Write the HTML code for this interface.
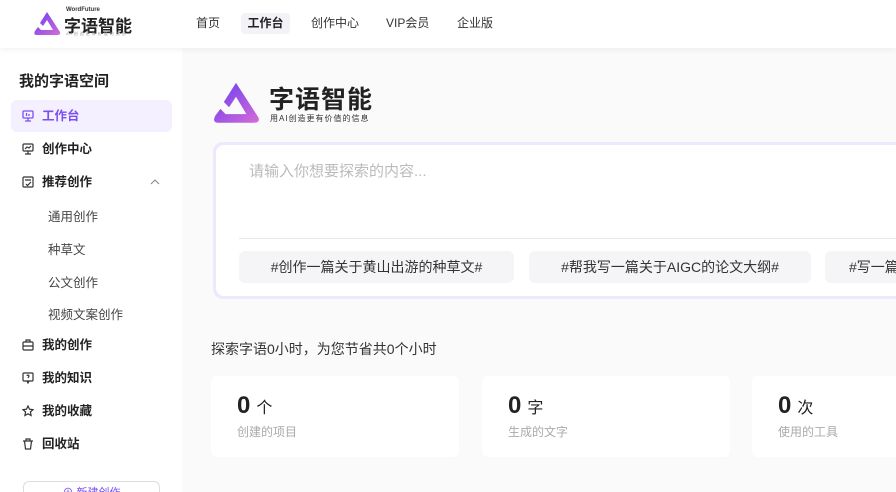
<!DOCTYPE html>
<html><head><meta charset="utf-8"><style>
*{margin:0;padding:0;box-sizing:border-box}
html,body{width:896px;height:492px;overflow:hidden}
body{background:#fafafa;font-family:"Liberation Sans","Noto Sans CJK SC",sans-serif;position:relative;color:#222}
.hdr{position:absolute;left:0;top:0;width:896px;height:48px;background:#fff;box-shadow:0 2px 6px rgba(0,0,0,.05);z-index:2}
.nav{position:absolute;top:13px;font-size:12px;color:#333;height:21px;line-height:21px}
.side{position:absolute;left:0;top:48px;width:182px;height:444px;background:#fff;overflow:hidden}
.it{position:absolute;left:11px;width:161px;height:32px;line-height:32px;font-size:12.5px;font-weight:bold;color:#222;padding-left:31px}
.it svg{position:absolute;left:11px;top:10px}
.sub{position:absolute;left:48px;font-size:12.5px;color:#444}
.box{position:absolute;left:213px;top:142px;width:700px;height:157px;background:#efe8fd;border-radius:10px}
.inner{position:absolute;left:3px;top:3px;right:0;bottom:3px;background:#fff;border-radius:8px}
.tag{position:absolute;top:251px;height:32px;line-height:32px;background:#f5f5f8;border-radius:6px;font-size:14px;color:#333;text-align:center}
.card{position:absolute;top:376px;width:248px;height:81px;background:#fff;border-radius:6px}
.card b{position:absolute;left:26px;top:16px;font-size:24px;color:#222}
.card b span{font-size:16px;font-weight:normal;margin-left:6px}
.card i{position:absolute;left:26px;top:47px;font-style:normal;font-size:12px;color:#aaa}
</style></head><body>
<div class="hdr">
<svg style="position:absolute;left:32px;top:10px" width="30" height="26" viewBox="0 0 30 26"><defs><linearGradient id="g" x1="0" y1="0" x2="1" y2="1"><stop offset="0" stop-color="#6a3df0"/><stop offset="1" stop-color="#d46cd8"/></linearGradient></defs><path d="M15 2 L28 22 Q29 25 25 25 L5 25 Q1 25 3 21 L6 17 L9 20 L21 20 L15 10 L11 16 L8 13 Z" fill="url(#g)"/></svg>
<div style="position:absolute;left:66px;top:7px;font-size:6px;font-weight:bold;color:#333">WordFuture</div>
<div style="position:absolute;left:64px;top:12px;font-size:17px;font-weight:bold;color:#222">字语智能</div>
<div style="position:absolute;left:66px;top:31px;font-size:4px;color:#999;letter-spacing:2px">AI创造更有价值的信息</div>
<div class="nav" style="left:196px">首页</div>
<div class="nav" style="left:241px;width:49px;background:#f3f2f7;border-radius:4px;text-align:center;font-weight:bold;color:#222">工作台</div>
<div class="nav" style="left:311px">创作中心</div>
<div class="nav" style="left:386px">VIP会员</div>
<div class="nav" style="left:457px">企业版</div>
</div>
<div class="side">
<div style="position:absolute;left:19px;top:22px;font-size:15px;font-weight:bold;color:#222">我的字语空间</div>
<div class="it" style="top:52px;background:#f4f0ff;border-radius:6px;color:#7b4df3"><svg width="12" height="12" viewBox="0 0 12 12" fill="none" stroke="#7b4df3" stroke-width="1.3"><rect x="1" y="1" width="10" height="7" rx="1"/><path d="M6 8v3M3 11h6M4.5 3v3M7 4v2"/></svg>工作台</div>
<div class="it" style="top:85px"><svg width="12" height="12" viewBox="0 0 12 12" fill="none" stroke="#333" stroke-width="1.2"><rect x="1" y="1" width="10" height="7" rx="1"/><path d="M6 8v3M3 11h6M3 6l2-2 2 1 2-2"/></svg>创作中心</div>
<div class="it" style="top:118px"><svg width="12" height="12" viewBox="0 0 12 12" fill="none" stroke="#333" stroke-width="1.2"><rect x="1" y="1" width="10" height="10" rx="1"/><path d="M3 4h6M4 8l1.5 1.5L9 6"/></svg>推荐创作<svg style="left:139px;top:13px" width="10" height="6" viewBox="0 0 10 6" fill="none" stroke="#888" stroke-width="1.1"><path d="M1 5l4-4 4 4"/></svg></div>
<div class="sub" style="top:158px">通用创作</div>
<div class="sub" style="top:191px">种草文</div>
<div class="sub" style="top:224px">公文创作</div>
<div class="sub" style="top:256px">视频文案创作</div>
<div class="it" style="top:281px"><svg width="12" height="12" viewBox="0 0 12 12" fill="none" stroke="#333" stroke-width="1.2"><rect x="1" y="3" width="10" height="8" rx="1"/><path d="M4 3V1h4v2M1 7h10"/></svg>我的创作</div>
<div class="it" style="top:314px"><svg width="12" height="12" viewBox="0 0 12 12" fill="none" stroke="#333" stroke-width="1.2"><rect x="1" y="1" width="10" height="8" rx="1"/><path d="M5 9l1 2 1-2M5 4a1 1 0 1 1 1.5 1L6 6"/></svg>我的知识</div>
<div class="it" style="top:347px"><svg width="12" height="12" viewBox="0 0 12 12" fill="none" stroke="#333" stroke-width="1.2"><path d="M6 1l1.5 3.2 3.5.4-2.6 2.4.7 3.5L6 8.8 2.9 10.5l.7-3.5L1 4.6l3.5-.4z"/></svg>我的收藏</div>
<div class="it" style="top:380px"><svg width="12" height="12" viewBox="0 0 12 12" fill="none" stroke="#333" stroke-width="1.2"><path d="M1 3h10M4 3V1h4v2M2.5 3l1 8h5l1-8"/></svg>回收站</div>
<div style="position:absolute;left:23px;top:433px;width:137px;height:20px;border:1px solid #ddd;border-radius:6px;font-size:11px;color:#7b4df3;text-align:center;line-height:22px">⊕ 新建创作</div>
</div>
<svg style="position:absolute;left:210px;top:77px" width="52" height="50" viewBox="0 0 30 26"><defs><linearGradient id="g2" x1="0" y1="0" x2="1" y2="1"><stop offset="0" stop-color="#6a3df0"/><stop offset="1" stop-color="#d46cd8"/></linearGradient></defs><path d="M15 2 L28 22 Q29 25 25 25 L5 25 Q1 25 3 21 L6 17 L9 20 L21 20 L15 10 L11 16 L8 13 Z" fill="url(#g2)"/></svg>
<div style="position:absolute;left:269px;top:80px;font-size:25px;font-weight:bold;color:#222;letter-spacing:1px">字语智能</div>
<div style="position:absolute;left:270px;top:113px;font-size:8px;color:#333;letter-spacing:1px">用AI创造更有价值的信息</div>
<div class="box"><div class="inner">
<div style="position:absolute;left:33px;top:15px;font-size:15px;color:#bbb">请输入你想要探索的内容...</div>
<div style="position:absolute;left:23px;top:93px;right:0;height:1px;background:#e8e8e8"></div>
</div></div>
<div class="tag" style="left:239px;width:275px">#创作一篇关于黄山出游的种草文#</div>
<div class="tag" style="left:529px;width:282px">#帮我写一篇关于AIGC的论文大纲#</div>
<div class="tag" style="left:825px;width:120px;text-align:left;padding-left:24px">#写一篇</div>
<div style="position:absolute;left:211px;top:339px;font-size:14px;color:#333">探索字语0小时，为您节省共0个小时</div>
<div class="card" style="left:211px"><b>0<span>个</span></b><i>创建的项目</i></div>
<div class="card" style="left:482px"><b>0<span>字</span></b><i>生成的文字</i></div>
<div class="card" style="left:752px"><b>0<span>次</span></b><i>使用的工具</i></div>
</body></html>
